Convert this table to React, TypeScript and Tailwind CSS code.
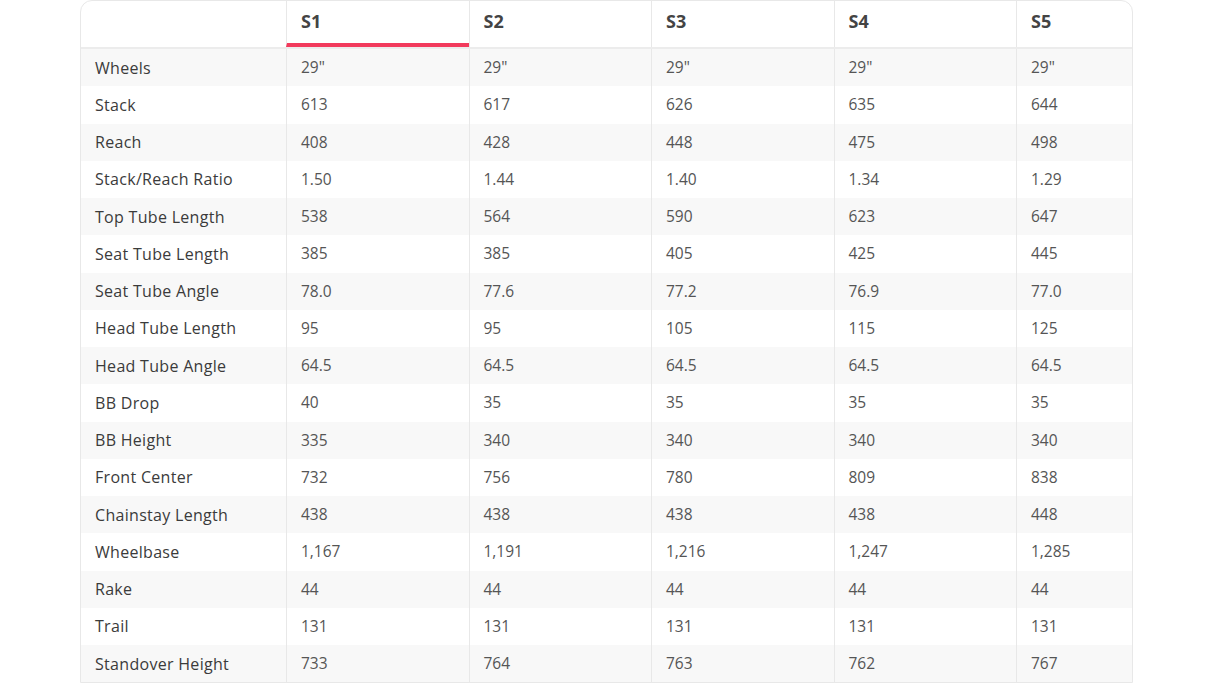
const sizes = ["S1", "S2", "S3", "S4", "S5"];

const rows: [string, string[]][] = [
  ["Wheels", ['29"', '29"', '29"', '29"', '29"']],
  ["Stack", ["613", "617", "626", "635", "644"]],
  ["Reach", ["408", "428", "448", "475", "498"]],
  ["Stack/Reach Ratio", ["1.50", "1.44", "1.40", "1.34", "1.29"]],
  ["Top Tube Length", ["538", "564", "590", "623", "647"]],
  ["Seat Tube Length", ["385", "385", "405", "425", "445"]],
  ["Seat Tube Angle", ["78.0", "77.6", "77.2", "76.9", "77.0"]],
  ["Head Tube Length", ["95", "95", "105", "115", "125"]],
  ["Head Tube Angle", ["64.5", "64.5", "64.5", "64.5", "64.5"]],
  ["BB Drop", ["40", "35", "35", "35", "35"]],
  ["BB Height", ["335", "340", "340", "340", "340"]],
  ["Front Center", ["732", "756", "780", "809", "838"]],
  ["Chainstay Length", ["438", "438", "438", "438", "448"]],
  ["Wheelbase", ["1,167", "1,191", "1,216", "1,247", "1,285"]],
  ["Rake", ["44", "44", "44", "44", "44"]],
  ["Trail", ["131", "131", "131", "131", "131"]],
  ["Standover Height", ["733", "764", "763", "762", "767"]],
];

const grid = "grid grid-cols-[205px_182.5px_182.5px_182.5px_182.5px_1fr]";

export default function App() {
  return (
    <div className="min-h-screen bg-white font-['Open_Sans',sans-serif]">
      <div className="ml-[80px] w-[1053px] rounded-t-xl border border-[#e8e8e8] overflow-hidden">
        {/* header */}
        <div className={`${grid} h-[48px] border-b-2 border-[#ececec]`}>
          <div />
          {sizes.map((s, i) => (
            <div
              key={s}
              className={`border-l border-[#e8e8e8] pl-[14px] pt-[7px] text-[18px] font-bold text-[#444] ${
                i === 0 ? "border-b-4 border-b-[#f23a5c]" : ""
              }`}
            >
              {s}
            </div>
          ))}
        </div>
        {rows.map(([label, vals], r) => (
          <div
            key={label}
            className={`${grid} h-[37.25px] ${r % 2 === 0 ? "bg-[#f8f8f8]" : "bg-white"}`}
          >
            <div className="flex items-center pl-[14px] text-[16px] tracking-[0.3px] text-[#3b3b3b]">
              {label}
            </div>
            {vals.map((v, i) => (
              <div
                key={i}
                className="flex items-center border-l border-[#e8e8e8] pl-[14px] text-[15.5px] text-[#555]"
              >
                {v}
              </div>
            ))}
          </div>
        ))}
      </div>
    </div>
  );
}
